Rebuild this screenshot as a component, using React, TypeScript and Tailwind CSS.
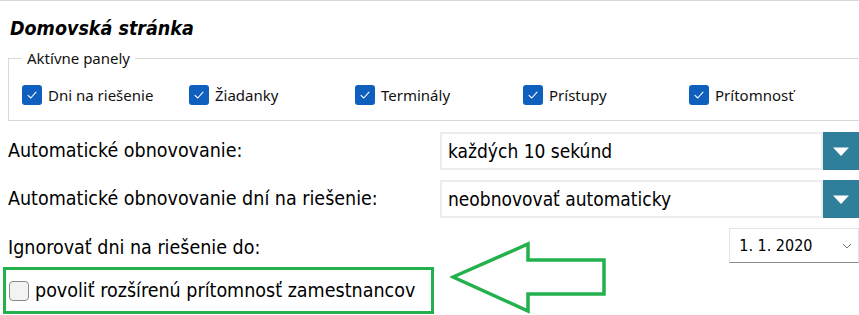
import React from "react";

const tah = "font-['DejaVu_Sans_Condensed','DejaVu_Sans',sans-serif]";
const seg = "font-['Noto_Sans','Open_Sans',sans-serif]";

function Check({ label }: { label: string }) {
  return (
    <div className="flex items-center gap-[6px]">
      <span className="w-[20px] h-[20px] rounded-[3px] bg-[#0f5fbe] flex items-center justify-center shrink-0">
        <svg width="12" height="12" viewBox="0 0 12 12" fill="none">
          <path d="M2 6.3 L4.8 9 L10 3.2" stroke="white" strokeWidth="1.1" strokeLinecap="round" strokeLinejoin="round" />
        </svg>
      </span>
      <span className={`${seg} text-[15px] text-[#111] leading-[20px]`}>{label}</span>
    </div>
  );
}

function Select({ value }: { value: string }) {
  return (
    <div className="flex h-[38px] w-[419px]">
      <div className={`flex-1 border-2 border-[#ececec] flex items-center pl-[6px] ${tah} text-[19px] text-black`}>{value}</div>
      <div className="w-[36px] bg-[#2f7f9b] flex items-center justify-center">
        <svg width="18" height="11" viewBox="0 0 18 11">
          <path d="M1 1.5 H17 L9 10 Z" fill="white" />
        </svg>
      </div>
    </div>
  );
}

export default function App() {
  return (
    <div className="w-[859px] h-[315px] overflow-hidden bg-white border-t border-[#d9d9d9] relative">
      <div className={`pl-[10px] pt-[16px] h-[48px] ${tah} font-bold italic text-[19.5px] leading-[24px] text-black`}>
        Domovská stránka
      </div>
      <fieldset className="ml-[8px] w-[880px] border border-[#d9d9d9] pl-[13px] pt-[18px] h-[72px]">
        <legend className={`${seg} px-[5px] text-[15px] leading-[18px] text-[#111]`}>Aktívne panely</legend>
        <div className="grid grid-cols-[167px_166px_168px_166px_167px]">
          <Check label="Dni na riešenie" />
          <Check label="Žiadanky" />
          <Check label="Terminály" />
          <Check label="Prístupy" />
          <Check label="Prítomnosť" />
        </div>
      </fieldset>
      <div className={`${tah} text-[19.5px] text-black mt-[11px] flex flex-col gap-[10px]`}>
        <div className="flex items-center">
          <div className="w-[440px] pl-[8px]">Automatické obnovovanie:</div>
          <Select value="každých 10 sekúnd" />
        </div>
        <div className="flex items-center">
          <div className="w-[440px] pl-[8px]">Automatické obnovovanie dní na riešenie:</div>
          <Select value="neobnovovať automaticky" />
        </div>
        <div className="flex items-center h-[35px]">
          <div className="w-[731px] pl-[8px] pt-[4px]">Ignorovať dni na riešenie do:</div>
          <div className="w-[130px] h-[35px] border border-[#e3e3e3] border-b-[#8a8a8a] flex items-center pl-[9px] pr-[6px] text-[16px]">
            <span className="flex-1">1. 1. 2020</span>
            <svg width="10" height="6" viewBox="0 0 10 6" fill="none">
              <path d="M1 1 L5 5 L9 1" stroke="#777" strokeWidth="1" />
            </svg>
          </div>
        </div>
      </div>
      <div className="ml-[3px] mt-[4px] w-[431px] h-[47px] border-[3px] border-[#22b14c] flex items-center pl-[3px] gap-[6px]">
        <span className="w-[20px] h-[20px] rounded-[4px] border border-[#8a8a8a] bg-[#f3f3f3]" />
        <span className={`${tah} text-[19.5px] text-black`}>povoliť rozšírenú prítomnosť zamestnancov</span>
      </div>
      <svg className="absolute left-[450px] top-[240px]" width="160" height="75" viewBox="0 0 160 75" fill="none">
        <path d="M3 36 L78 3 L78 19 L154 19 L154 53 L78 53 L78 70 Z" stroke="#22b14c" strokeWidth="3.5" strokeLinejoin="miter" />
      </svg>
    </div>
  );
}
